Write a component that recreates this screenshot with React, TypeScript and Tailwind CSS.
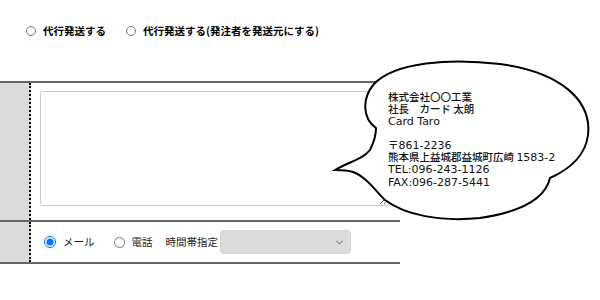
import { ChevronDown } from "lucide-react";

const JP = "font-['Noto_Sans_CJK_JP','Noto_Sans',sans-serif]";

// Speech bubble outline, drawn in page coordinates
const BUBBLE_PATH =
  "M335,170 C348,162 362,160 370,150 C374,142 376,134 376,128 C362,118 362,98 374,84 C395,62 450,58 500,64 C560,72 592,100 588,135 C585,158 568,170 550,178 C545,200 520,212 480,218 C440,222 405,215 385,200 C375,190 365,176 353,172 C347,170 340,170 335,170 Z";

const Latin = ({ children }: { children: React.ReactNode }) => (
  <span className="font-['DejaVu_Sans',sans-serif] text-[11px] leading-[12px]">{children}</span>
);

const BUBBLE_LINES: React.ReactNode[] = [
  "株式会社〇〇工業",
  "社長　カード 太朗",
  <Latin>Card Taro</Latin>,
  "\u00a0",
  <>〒<Latin>861-2236</Latin></>,
  <>熊本県上益城郡益城町広崎 <Latin>1583-2</Latin></>,
  <Latin>TEL:096-243-1126</Latin>,
  <Latin>FAX:096-287-5441</Latin>,
];

const App = () => {
  return (
    <div className={`relative w-[600px] h-[300px] bg-white overflow-hidden text-black ${JP}`}>
      {/* Shipping option radios */}
      <div className="flex items-center h-[62px] pl-[26px] text-[10.5px] font-bold">
        <label className="flex items-center gap-[7px]">
          <input type="radio" name="ship" className="m-0 w-[10px] h-[10px]" />
          代行発送する
        </label>
        <label className="flex items-center gap-[7px] ml-[20px]">
          <input type="radio" name="ship" className="m-0 w-[10px] h-[10px]" />
          代行発送する(発注者を発送元にする)
        </label>
      </div>
      <div className="h-[19px]" />

      {/* Form table */}
      <div className="w-[400px] border-t-2 border-[#666]">
        <div className="flex border-b-2 border-[#666]">
          <div className="w-[31px] shrink-0 bg-[#dcdcdc] border-r-2 border-dotted border-black" />
          <div className="flex-1 pl-[9px] pr-[11px] pt-[8px] pb-[14px]">
            <textarea className="block w-full h-[115px] border border-[#c8c8c8] rounded-[3px] bg-white" />
          </div>
        </div>
        <div className="flex border-b-2 border-[#666]">
          <div className="w-[31px] shrink-0 bg-[#dcdcdc] border-r-2 border-dotted border-black" />
          <div className="flex-1 h-[40px] flex items-center pl-[13px] text-[10.5px] text-[#222]">
            <label className="flex items-center gap-[7px]">
              <input type="radio" name="contact" defaultChecked className="m-0 w-[12px] h-[12px]" />
              メール
            </label>
            <label className="flex items-center gap-[7px] ml-[19px]">
              <input type="radio" name="contact" className="m-0 w-[11px] h-[11px]" />
              電話
            </label>
            <span className="ml-[13px]">時間帯指定</span>
            <div className="relative ml-[2px]">
              <select
                disabled
                className="appearance-none block w-[131px] h-[24px] rounded-[4px] bg-[#dcdcdc] border border-[#d4d4d4]"
              />
              <ChevronDown className="absolute right-[6px] top-[7px] w-[11px] h-[11px] text-[#888]" strokeWidth={2.5} />
            </div>
          </div>
        </div>
      </div>

      {/* Business card speech bubble */}
      <svg className="absolute inset-0 pointer-events-none" width="600" height="300" viewBox="0 0 600 300">
        <path d={BUBBLE_PATH} fill="white" stroke="black" strokeWidth="2" />
      </svg>
      <div className="absolute left-[388px] top-[91px] flex flex-col text-[10.5px] font-medium text-[#111] whitespace-nowrap">
        {BUBBLE_LINES.map((line, i) => (
          <div key={i} className="h-[12.15px] leading-[12px] flex items-center">
            <span>{line}</span>
          </div>
        ))}
      </div>
    </div>
  );
};

export default App;
